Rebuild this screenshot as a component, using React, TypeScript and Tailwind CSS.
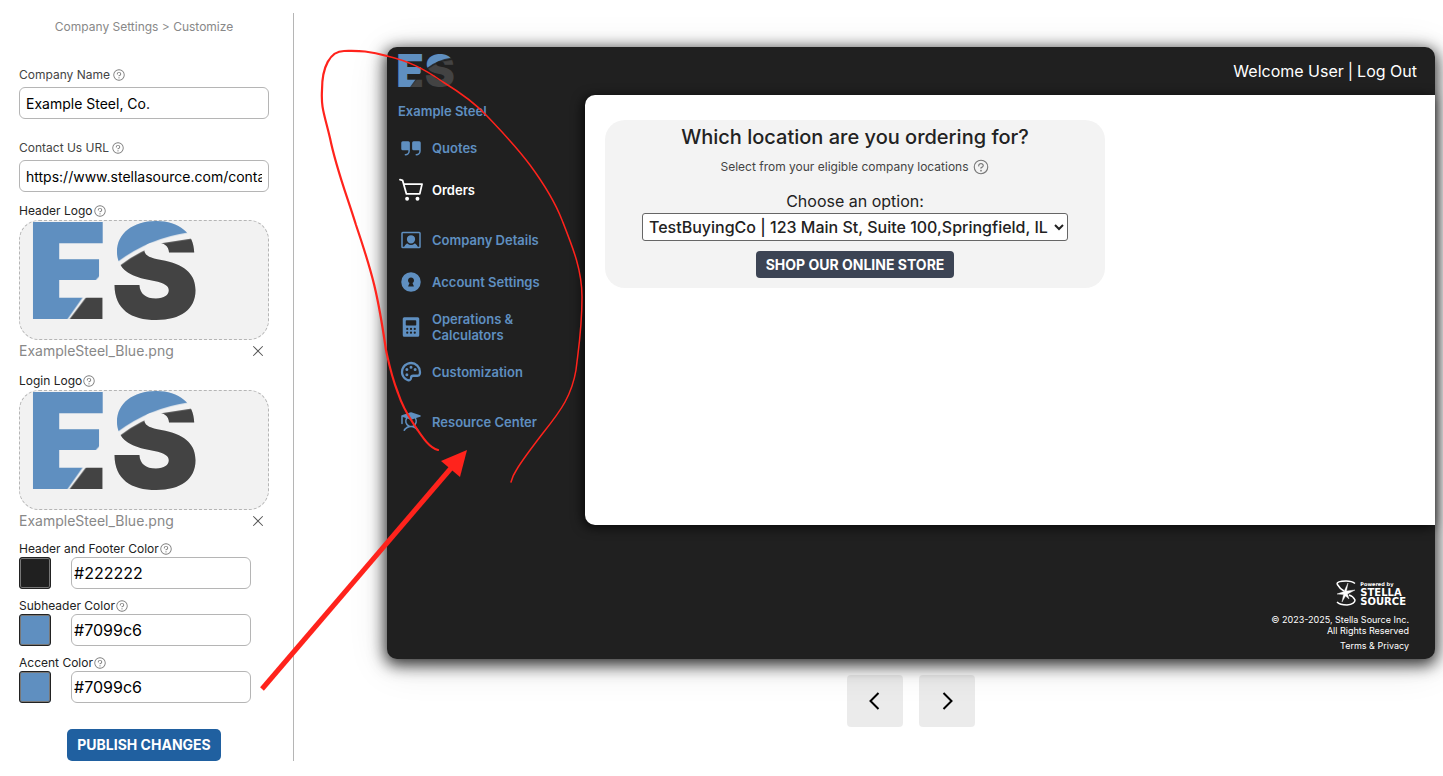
import React, { useId, useState } from 'react';
import {
  PiCalculatorFill,
  PiKeyholeFill,
  PiPaletteBold,
  PiQuestion,
  PiQuotesFill,
  PiStudentFill,
  PiUserRectangleFill,
  PiX,
} from 'react-icons/pi';

// ES company logo, blue above the swoosh and gray below it
function CompanyLogo({ className }: { className: string }) {
  const id = useId();
  return (
    <svg viewBox="95 60 508 302" className={`overflow-visible ${className}`} role="img" aria-label="Example Steel logo">
      <defs>
        <pattern id={id} patternUnits="userSpaceOnUse" x="0" y="0" width="700" height="450">
          <path d="M0 0H700V75L566 95Q450 112 356 182L323 200L290 236L252 286L200 360H0Z" fill="#5f8fc0" />
          <path d="M206 360L262 286L340 245L363 193Q420 150 490 127L578 113L700 100V450H206Z" fill="#434343" />
        </pattern>
      </defs>
      <g fill={`url(#${id})`} fontFamily="Inter, sans-serif" fontWeight="900" fontSize="402">
        <text x="79" y="356">E</text>
        <text x="333" y="356">S</text>
      </g>
    </svg>
  );
}

function CartIcon({ className }: { className?: string }) {
  return (
    <svg viewBox="20 129 74 74" className={className} fill="none" stroke="currentColor" strokeLinecap="round" strokeLinejoin="round" aria-hidden="true">
      <path d="M23 134L31 136L43 178H84L91 148H35" strokeWidth="5.500" />
      <circle cx="45" cy="193" r="6" fill="currentColor" stroke="none" />
      <circle cx="77" cy="193" r="6" fill="currentColor" stroke="none" />
    </svg>
  );
}

function FieldLabel({ htmlFor, children, spaced }: { htmlFor: string; children: React.ReactNode; spaced?: boolean }) {
  return (
    <label
      htmlFor={htmlFor}
      className={`flex items-center text-xs leading-4 ${spaced ? 'gap-0.5 text-[#444]' : 'text-[#222]'}`}
    >
      {children}
      <PiQuestion className="h-3.5 w-3.5 text-[#777]" />
    </label>
  );
}

function LogoUpload({ id, label }: { id: string; label: string }) {
  const [file, setFile] = useState('ExampleSteel_Blue.png');
  return (
    <div>
      <FieldLabel htmlFor={id}>{label}</FieldLabel>
      <button
        id={id}
        type="button"
        className="mt-px flex h-[120px] w-full items-start rounded-[20px] border border-dashed border-[#b5b5b5] bg-[#f2f2f2] pl-3"
      >
        {file && <CompanyLogo className="h-[100px] w-[168px]" />}
      </button>
      <div className="mt-px flex h-5 items-center justify-between pr-[3px] text-sm text-[#888]">
        <span>{file}</span>
        <button type="button" aria-label="Remove file" onClick={() => setFile('')}>
          <PiX className="h-4 w-4 text-[#555]" />
        </button>
      </div>
    </div>
  );
}

function ColorField({ id, label, initial, swatch }: { id: string; label: string; initial: string; swatch: string }) {
  const [value, setValue] = useState(initial);
  return (
    <div>
      <FieldLabel htmlFor={id}>{label}</FieldLabel>
      <div className="flex gap-5">
        <button
          type="button"
          aria-label={`Pick ${label}`}
          className={`h-8 w-8 rounded-[3px] border border-[#222] ring-1 ring-inset ring-[#777] ${swatch}`}
        />
        <input
          id={id}
          value={value}
          onChange={(e) => setValue(e.target.value)}
          className="h-8 w-[180px] rounded-md border border-[#b5b5b5] px-0.5 text-base text-black"
        />
      </div>
    </div>
  );
}

const navItems = [
  { label: 'Quotes', icon: PiQuotesFill },
  { label: 'Orders', icon: CartIcon, active: true },
  { label: 'Company Details', icon: PiUserRectangleFill, group: true },
  { label: 'Account Settings', icon: PiKeyholeFill },
  { label: 'Operations & Calculators', icon: PiCalculatorFill },
  { label: 'Customization', icon: PiPaletteBold },
  { label: 'Resource Center', icon: PiStudentFill, group: true },
];

function StellaLogo() {
  return (
    <div className="flex items-center gap-1 pr-[3px] text-white">
      <svg viewBox="0 0 20 26" className="h-[26px] w-5" fill="none" stroke="currentColor">
        <path d="M1 4Q1 1 10 1Q16 1 19 3.500M1 4Q4 9 8 11M1 22Q4 25 11 25Q19 24 19 20Q17 16 13 15" strokeWidth="1.500" />
        <path d="M12 3L10.500 11L19 10L11.500 14L13 19L9.500 16L6 22L7.500 14.500L1 14L8 11.500Z" fill="currentColor" strokeWidth="0.400" />
      </svg>
      <div className="flex flex-col font-['DejaVu_Sans',sans-serif] text-[10px] font-bold leading-[9px]">
        <span className="text-[5px] leading-[7px]">Powered by</span>
        <span>STELLA</span>
        <span>SOURCE</span>
      </div>
    </div>
  );
}

// Red hand drawn marks on top of the page
function Annotations() {
  return (
    <svg
      width="1443"
      height="776"
      viewBox="0 0 1443 776"
      className="pointer-events-none absolute left-0 top-0"
      fill="none"
      stroke="#ff231c"
      strokeLinecap="round"
      aria-hidden="true"
    >
      <path
        d="M438 450C430 448 424 440 413 423C405 411 401 402 398 393C391 375 389 364 386 350C378 295 373 275 356 225C346 193 336 168 330 138C324 113 321 108 322 90C322 67 330 51 344 51C356 51 367 50 387 56"
        strokeWidth="2.200"
      />
      <path
        d="M387 56C408 61 423 68 443 82C461 93 474 102 487 116C504 134 516 146 530 165C544 184 555 202 562 220C573 248 582 270 582 297C582 328 579 345 576 370C574 382 571 391 565 402C559 413 551 423 543 433C533 446 523 459 517 469C513 475 512 478 511 482"
        strokeWidth="1.500"
      />
      <path d="M262 689L452 467" strokeWidth="5" strokeLinecap="butt" />
      <path d="M467 450L441 461L460 477Z" fill="#ff231c" stroke="none" />
    </svg>
  );
}

export default function App() {
  const [name, setName] = useState('Example Steel, Co.');
  const [url, setUrl] = useState('https://www.stellasource.com/contact');

  return (
    <div className="relative flex min-h-screen bg-white font-['Inter',sans-serif] text-[#222]">
      {/* Settings column */}
      <aside className="mb-[15px] mt-[13px] w-[294px] shrink-0 self-start border-r border-[#b5b5b5] pl-[19px] pr-6">
        <nav className="pt-1.5 text-center text-xs leading-4 text-[#888]">Company Settings &gt; Customize</nav>

        <form onSubmit={(e) => e.preventDefault()}>
          <div className="mt-8">
            <FieldLabel htmlFor="company-name" spaced>Company Name</FieldLabel>
            <input
              id="company-name"
              value={name}
              onChange={(e) => setName(e.target.value)}
              className="mt-1 h-8 w-full rounded-md border border-[#b5b5b5] px-1.5 text-sm text-black"
            />
          </div>
          <div className="mt-[21px]">
            <FieldLabel htmlFor="contact-url" spaced>Contact Us URL</FieldLabel>
            <input
              id="contact-url"
              value={url}
              onChange={(e) => setUrl(e.target.value)}
              className="mt-1 h-8 w-full rounded-md border border-[#b5b5b5] px-1.5 text-sm text-black"
            />
          </div>

          <div className="mt-[11px] flex flex-col gap-3">
            <LogoUpload id="header-logo" label="Header Logo" />
            <LogoUpload id="login-logo" label="Login Logo" />
          </div>

          <div className="mt-2.5 flex flex-col gap-[9px]">
            <ColorField id="header-color" label="Header and Footer Color" initial="#222222" swatch="bg-[#202020]" />
            <ColorField id="subheader-color" label="Subheader Color" initial="#7099c6" swatch="bg-[#5f8fc0]" />
            <ColorField id="accent-color" label="Accent Color" initial="#7099c6" swatch="bg-[#5f8fc0]" />
          </div>

          <div className="mt-[26px] flex justify-center">
            <button type="submit" className="h-8 rounded-[5px] bg-[#2060a0] px-2.5 text-sm font-bold text-white">
              PUBLISH CHANGES
            </button>
          </div>
        </form>
      </aside>

      {/* Live preview */}
      <main className="min-w-0 flex-1 pl-[93px] pr-2 pt-[47px]">
        <div className="flex rounded-[10px] bg-[#202020] shadow-[0_4px_16px_2px_rgba(0,0,0,0.8),0_6px_40px_rgba(0,0,0,0.12)]">
          <div className="w-[198px] shrink-0 pl-[11px] pt-[7px] text-[#5f8fc0]">
            <CompanyLogo className="h-[34px] w-[57px]" />
            <p className="mt-[15px] text-[13px] font-semibold leading-4">Example Steel</p>
            <nav className="mt-4 flex flex-col gap-4">
              {navItems.map(({ label, icon: Icon, active, group }) => (
                <a
                  key={label}
                  href="#"
                  className={`flex min-h-[26px] w-[150px] items-center gap-[9px] pl-px text-[13px] font-semibold leading-4 ${
                    active ? 'text-white' : ''
                  } ${group ? 'mt-2' : ''}`}
                >
                  <Icon className="h-6 w-6 shrink-0" />
                  {label}
                </a>
              ))}
            </nav>
          </div>

          <div className="flex min-w-0 flex-1 flex-col">
            <header className="flex h-12 items-center justify-end gap-1 pr-[18px] text-base text-white">
              <span>Welcome User</span>
              <span>|</span>
              <a href="#">Log Out</a>
            </header>

            <section className="h-[430px] rounded-l-[10px] bg-white px-5 pt-[25px] shadow-[-2px_2px_12px_rgba(0,0,0,0.8)]">
              <div className="flex h-[168px] max-w-[500px] flex-col items-center rounded-[20px] bg-[#f3f3f3] pt-0.5">
                <h1 className="text-xl font-medium leading-[30px]">Which location are you ordering for?</h1>
                <p className="mt-1.5 flex items-center gap-[3px] text-xs leading-[18px] text-[#444]">
                  Select from your eligible company locations
                  <PiQuestion className="h-[18px] w-[18px] text-[#777]" />
                </p>
                <label htmlFor="location" className="mt-[13px] text-base leading-6">
                  Choose an option:
                </label>
                <select
                  id="location"
                  className="h-7 rounded-[3px] border border-[#666] bg-white px-0.5 text-base font-medium"
                >
                  <option>TestBuyingCo | 123 Main St, Suite 100,Springfield, IL</option>
                </select>
                <button
                  type="button"
                  className="mt-2.5 h-[27px] rounded-[4px] bg-[#3c4454] px-2.5 text-sm font-bold text-white"
                >
                  SHOP OUR ONLINE STORE
                </button>
              </div>
            </section>

            <footer className="flex flex-col items-end pb-2 pr-[26px] pt-[55px] text-[9px] leading-[11px] text-white">
              <StellaLogo />
              <p className="mt-2 text-right">
                © 2023-2025, Stella Source Inc.
                <br />
                All Rights Reserved
              </p>
              <a href="#" className="mt-1">
                Terms &amp; Privacy
              </a>
            </footer>
          </div>
        </div>

        <div className="mt-4 flex justify-center gap-4">
          <button
            type="button"
            aria-label="Previous"
            className="flex h-[52px] w-14 items-center justify-center rounded-[4px] bg-black/8 text-black"
          >
            <svg viewBox="0 0 24 24" className="h-6 w-6" fill="none" stroke="currentColor" strokeWidth="2">
              <path d="M15.500 4L7.500 12L15.500 20" />
            </svg>
          </button>
          <button
            type="button"
            aria-label="Next"
            className="flex h-[52px] w-14 items-center justify-center rounded-[4px] bg-black/8 text-black"
          >
            <svg viewBox="0 0 24 24" className="h-6 w-6" fill="none" stroke="currentColor" strokeWidth="2">
              <path d="M8.500 4L16.500 12L8.500 20" />
            </svg>
          </button>
        </div>
      </main>

      <Annotations />
    </div>
  );
}
